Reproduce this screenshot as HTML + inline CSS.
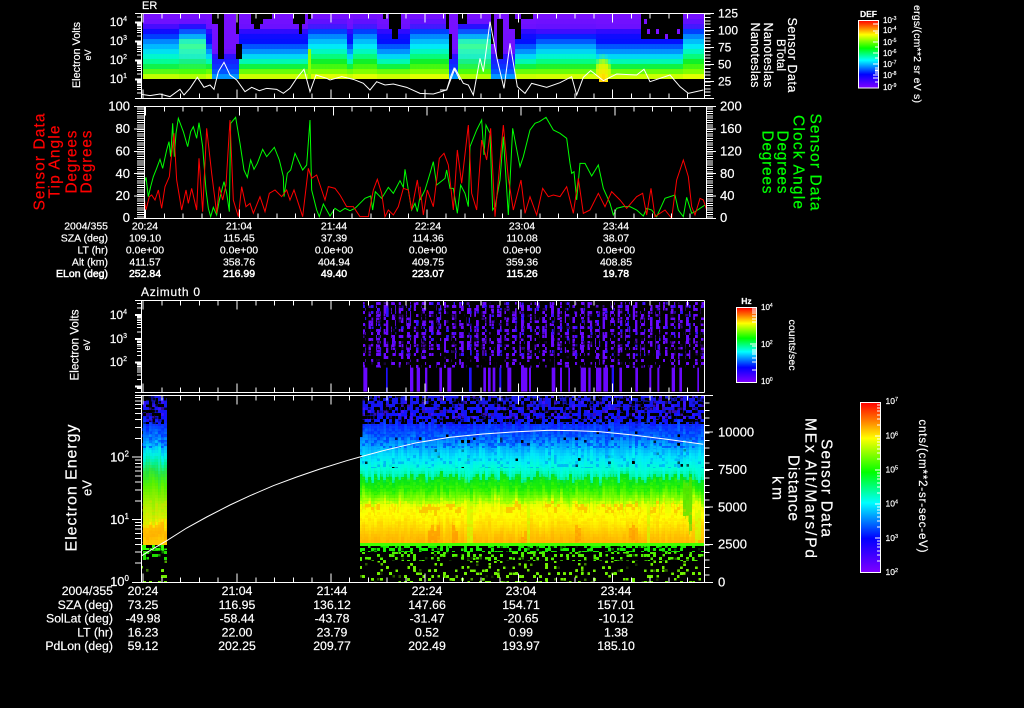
<!DOCTYPE html>
<html><head><meta charset="utf-8"><title>Sensor Data</title>
<style>
html,body{margin:0;padding:0;background:#000;width:1024px;height:708px;overflow:hidden}
svg{display:block}
text{font-family:"Liberation Sans",sans-serif;fill:#fff;stroke:#fff;stroke-width:.2}
.r text{fill:#ff0000;stroke:#ff0000}
.g text{fill:#00ff00;stroke:#00ff00}
</style></head><body>
<svg width="1024" height="708" viewBox="0 0 1024 708" xmlns="http://www.w3.org/2000/svg">
<defs>
<linearGradient id="cb" x1="0" y1="0" x2="0" y2="1">
<stop offset="0" stop-color="#ff0000"/><stop offset=".11" stop-color="#ff8000"/><stop offset=".21" stop-color="#ffff00"/><stop offset=".41" stop-color="#00ff00"/><stop offset=".59" stop-color="#00ffff"/><stop offset=".8" stop-color="#0000ff"/><stop offset="1" stop-color="#8000ff"/>
</linearGradient>
<linearGradient id="gA" gradientUnits="userSpaceOnUse" x1="0" y1="15" x2="0" y2="80">
<stop offset="0" stop-color="#7a10ff"/><stop offset=".14" stop-color="#6a10ff"/><stop offset=".21" stop-color="#2008ff"/><stop offset=".29" stop-color="#0010ff"/><stop offset=".4" stop-color="#0080ff"/><stop offset=".5" stop-color="#00c0ff"/><stop offset=".6" stop-color="#00f0e8"/><stop offset=".7" stop-color="#00ffa0"/><stop offset=".8" stop-color="#10f040"/><stop offset=".9" stop-color="#70ff00"/><stop offset=".96" stop-color="#d0ff00"/><stop offset="1" stop-color="#ffff00"/>
</linearGradient>
<linearGradient id="gB" gradientUnits="userSpaceOnUse" x1="0" y1="15" x2="0" y2="80">
<stop offset="0" stop-color="#7a10ff"/><stop offset=".1" stop-color="#6a10ff"/><stop offset=".2" stop-color="#1010ff"/><stop offset=".32" stop-color="#00a0ff"/><stop offset=".4" stop-color="#20f0c0"/><stop offset=".46" stop-color="#40ff90"/><stop offset=".62" stop-color="#20f0d0"/><stop offset=".76" stop-color="#10f060"/><stop offset=".88" stop-color="#50ff00"/><stop offset=".96" stop-color="#c0ff00"/><stop offset="1" stop-color="#ffff00"/>
</linearGradient>
<linearGradient id="gC" gradientUnits="userSpaceOnUse" x1="0" y1="15" x2="0" y2="80">
<stop offset="0" stop-color="#7a10ff"/><stop offset=".55" stop-color="#7010ff"/><stop offset=".65" stop-color="#2010ff"/><stop offset=".85" stop-color="#0040ff"/><stop offset="1" stop-color="#00c0ff"/>
</linearGradient>
<linearGradient id="gD" gradientUnits="userSpaceOnUse" x1="0" y1="15" x2="0" y2="80">
<stop offset="0" stop-color="#7a10ff"/><stop offset=".2" stop-color="#6a10ff"/><stop offset=".27" stop-color="#1808ff"/><stop offset=".42" stop-color="#0010ff"/><stop offset=".5" stop-color="#0060ff"/><stop offset=".6" stop-color="#00b0ff"/><stop offset=".66" stop-color="#00e8f0"/><stop offset=".74" stop-color="#00ff90"/><stop offset=".8" stop-color="#10f030"/><stop offset=".88" stop-color="#70ff00"/><stop offset=".96" stop-color="#d8ff00"/><stop offset="1" stop-color="#ffff00"/>
</linearGradient>
<linearGradient id="gE" gradientUnits="userSpaceOnUse" x1="0" y1="15" x2="0" y2="80">
<stop offset="0" stop-color="#7a10ff"/><stop offset=".16" stop-color="#5010ff"/><stop offset=".24" stop-color="#0030ff"/><stop offset=".36" stop-color="#00a0ff"/><stop offset=".48" stop-color="#00e8f8"/><stop offset=".6" stop-color="#00ffa0"/><stop offset=".72" stop-color="#10f020"/><stop offset=".86" stop-color="#70ff00"/><stop offset=".95" stop-color="#e0ff00"/><stop offset="1" stop-color="#ffff00"/>
</linearGradient>
<linearGradient id="gF" gradientUnits="userSpaceOnUse" x1="0" y1="15" x2="0" y2="80">
<stop offset="0" stop-color="#7a10ff"/><stop offset=".22" stop-color="#6010ff"/><stop offset=".3" stop-color="#0808ff"/><stop offset=".42" stop-color="#0060ff"/><stop offset=".52" stop-color="#00c0ff"/><stop offset=".62" stop-color="#00f0e0"/><stop offset=".7" stop-color="#00ff90"/><stop offset=".78" stop-color="#10f030"/><stop offset=".88" stop-color="#70ff00"/><stop offset=".96" stop-color="#e0ff00"/><stop offset="1" stop-color="#ffff00"/>
</linearGradient>
<radialGradient id="bump" cx=".5" cy=".95" r=".85">
<stop offset="0" stop-color="#ffa000"/><stop offset=".3" stop-color="#ffe800"/><stop offset=".7" stop-color="#c8ff00"/><stop offset="1" stop-color="#60ff00" stop-opacity="0"/>
</radialGradient>
<linearGradient id="gR" gradientUnits="userSpaceOnUse" x1="0" y1="396" x2="0" y2="560">
<stop offset="0" stop-color="#1818e8"/><stop offset=".146" stop-color="#1010ff"/><stop offset=".22" stop-color="#0050ff"/><stop offset=".3" stop-color="#00a0ff"/><stop offset=".38" stop-color="#00e8f8"/><stop offset=".45" stop-color="#00ffd0"/><stop offset=".488" stop-color="#00f0a0"/><stop offset=".494" stop-color="#00e020"/><stop offset=".573" stop-color="#20f000"/><stop offset=".634" stop-color="#90ff00"/><stop offset=".67" stop-color="#e8ff00"/><stop offset=".726" stop-color="#ffff00"/><stop offset=".787" stop-color="#ffe000"/><stop offset=".848" stop-color="#ffc000"/><stop offset=".896" stop-color="#ffb000"/><stop offset="1" stop-color="#ffb000"/>
</linearGradient>
<linearGradient id="gL" gradientUnits="userSpaceOnUse" x1="0" y1="396" x2="0" y2="560">
<stop offset="0" stop-color="#1818e8"/><stop offset=".146" stop-color="#1010ff"/><stop offset=".21" stop-color="#0050ff"/><stop offset=".3" stop-color="#00b0ff"/><stop offset=".36" stop-color="#00f0e0"/><stop offset=".41" stop-color="#00f090"/><stop offset=".45" stop-color="#20e040"/><stop offset=".54" stop-color="#50f000"/><stop offset=".66" stop-color="#a0f000"/><stop offset=".77" stop-color="#d8f000"/><stop offset=".785" stop-color="#ffc000"/><stop offset=".85" stop-color="#ffb000"/><stop offset=".89" stop-color="#ffc800"/><stop offset="1" stop-color="#ffc800"/>
</linearGradient>
<pattern id="cols" patternUnits="userSpaceOnUse" x="361" y="0" width="7.55" height="10"><rect x="0" y="0" width="4.6" height="10" fill="#6a08ff"/></pattern>
<pattern id="cols2" patternUnits="userSpaceOnUse" x="363" y="0" width="7.55" height="10"><rect x="0" y="0" width="3" height="10" fill="#3010ff"/></pattern>
<clipPath id="cR"><rect x="360" y="396" width="344" height="147.5"/></clipPath>
<clipPath id="cL"><rect x="142" y="396" width="25" height="149"/></clipPath>

<filter id="px1" filterUnits="userSpaceOnUse" x="140" y="14" width="566" height="68" color-interpolation-filters="sRGB">
<feFlood x="141" y="16" width="1" height="1" flood-color="#fff" result="f"/>
<feComposite in="f" in2="f" x="140" y="14" width="3" height="5" result="c"/>
<feTile in="c" result="t"/>
<feComposite in="SourceGraphic" in2="t" operator="in"/>
<feMorphology operator="dilate" radius="1 2"/>
</filter>
<filter id="spec" filterUnits="userSpaceOnUse" x="140" y="390" width="570" height="190" color-interpolation-filters="sRGB">
<feTurbulence type="fractalNoise" baseFrequency=".8 .03" numOctaves="2" seed="5" result="n0"/>
<feColorMatrix in="n0" type="matrix" values="1 0 0 0 0 0 0 0 0 .5 0 0 0 0 0 0 0 0 0 1" result="n"/>
<feDisplacementMap in="SourceGraphic" in2="n" scale="24" xChannelSelector="G" yChannelSelector="R" result="d"/>
<feFlood x="141" y="391" width="1" height="1" flood-color="#fff" result="f"/>
<feComposite in="f" in2="f" x="140" y="390" width="3" height="3" result="c"/>
<feTile in="c" result="t"/>
<feComposite in="d" in2="t" operator="in"/>
<feMorphology operator="dilate" radius="1"/>
</filter>
<filter id="h50" filterUnits="userSpaceOnUse" x="140" y="296" width="570" height="292" color-interpolation-filters="sRGB">
<feTurbulence type="fractalNoise" baseFrequency=".37" numOctaves="1" seed="3" result="n"/>
<feColorMatrix in="n" type="matrix" values="1 0 0 0 0 1 0 0 0 0 1 0 0 0 0 0 0 0 0 1" result="m"/>
<feFlood x="141" y="297" width="1" height="1" flood-color="#fff" result="f"/>
<feComposite in="f" in2="f" x="140" y="296" width="3" height="3" result="c"/>
<feTile in="c" result="t"/>
<feComposite in="m" in2="t" operator="in"/>
<feMorphology operator="dilate" radius="1"/>
<feColorMatrix type="matrix" values="0 0 0 0 1 0 0 0 0 1 0 0 0 0 1 40 0 0 0 -21" result="a"/>
<feComposite in="SourceGraphic" in2="a" operator="in"/>
</filter>
<filter id="h30" filterUnits="userSpaceOnUse" x="140" y="296" width="570" height="292" color-interpolation-filters="sRGB">
<feTurbulence type="fractalNoise" baseFrequency=".37" numOctaves="1" seed="11" result="n"/>
<feColorMatrix in="n" type="matrix" values="1 0 0 0 0 1 0 0 0 0 1 0 0 0 0 0 0 0 0 1" result="m"/>
<feFlood x="141" y="297" width="1" height="1" flood-color="#fff" result="f"/>
<feComposite in="f" in2="f" x="140" y="296" width="3" height="3" result="c"/>
<feTile in="c" result="t"/>
<feComposite in="m" in2="t" operator="in"/>
<feMorphology operator="dilate" radius="1"/>
<feColorMatrix type="matrix" values="0 0 0 0 1 0 0 0 0 1 0 0 0 0 1 40 0 0 0 -23" result="a"/>
<feComposite in="SourceGraphic" in2="a" operator="in"/>
</filter>
<filter id="h15" filterUnits="userSpaceOnUse" x="140" y="296" width="570" height="292" color-interpolation-filters="sRGB">
<feTurbulence type="fractalNoise" baseFrequency=".37" numOctaves="1" seed="23" result="n"/>
<feColorMatrix in="n" type="matrix" values="1 0 0 0 0 1 0 0 0 0 1 0 0 0 0 0 0 0 0 1" result="m"/>
<feFlood x="141" y="297" width="1" height="1" flood-color="#fff" result="f"/>
<feComposite in="f" in2="f" x="140" y="296" width="3" height="3" result="c"/>
<feTile in="c" result="t"/>
<feComposite in="m" in2="t" operator="in"/>
<feMorphology operator="dilate" radius="1"/>
<feColorMatrix type="matrix" values="0 0 0 0 1 0 0 0 0 1 0 0 0 0 1 40 0 0 0 -26" result="a"/>
<feComposite in="SourceGraphic" in2="a" operator="in"/>
</filter>
<filter id="h05" filterUnits="userSpaceOnUse" x="140" y="296" width="570" height="292" color-interpolation-filters="sRGB">
<feTurbulence type="fractalNoise" baseFrequency=".37" numOctaves="1" seed="41" result="n"/>
<feColorMatrix in="n" type="matrix" values="1 0 0 0 0 1 0 0 0 0 1 0 0 0 0 0 0 0 0 1" result="m"/>
<feFlood x="141" y="297" width="1" height="1" flood-color="#fff" result="f"/>
<feComposite in="f" in2="f" x="140" y="296" width="3" height="3" result="c"/>
<feTile in="c" result="t"/>
<feComposite in="m" in2="t" operator="in"/>
<feMorphology operator="dilate" radius="1"/>
<feColorMatrix type="matrix" values="0 0 0 0 1 0 0 0 0 1 0 0 0 0 1 40 0 0 0 -29" result="a"/>
<feComposite in="SourceGraphic" in2="a" operator="in"/>
</filter>
</defs>

<rect width="1024" height="708" fill="#000"/>

<!-- Panel 1 spectrogram -->
<g filter="url(#px1)">
<rect x="142" y="15" width="36" height="65" fill="url(#gA)"/>
<rect x="178" y="15" width="28" height="65" fill="url(#gB)"/>
<rect x="206" y="15" width="6" height="65" fill="url(#gD)"/>
<rect x="212" y="15" width="28" height="65" fill="url(#gC)"/>
<rect x="240" y="15" width="68" height="65" fill="url(#gD)"/>
<rect x="308" y="15" width="40" height="65" fill="url(#gE)"/>
<rect x="348" y="15" width="5" height="65" fill="url(#gD)"/>
<rect x="353" y="15" width="25" height="65" fill="url(#gE)"/>
<rect x="378" y="15" width="32" height="65" fill="url(#gD)"/>
<rect x="410" y="15" width="38" height="65" fill="url(#gE)"/>
<rect x="448" y="15" width="9" height="65" fill="url(#gC)"/>
<rect x="457" y="15" width="33" height="65" fill="url(#gB)"/>
<rect x="490" y="15" width="25" height="65" fill="url(#gC)"/>
<rect x="515" y="15" width="22" height="65" fill="url(#gD)"/>
<rect x="537" y="15" width="60" height="65" fill="url(#gF)"/>
<rect x="597" y="15" width="86" height="65" fill="url(#gD)"/>
<rect x="683" y="15" width="21" height="65" fill="url(#gE)"/>
<rect x="308" y="50" width="3" height="30" fill="#90ff00"/>
<ellipse cx="603" cy="68" rx="7" ry="17" fill="url(#bump)"/>
<rect x="640" y="15" width="43" height="25" fill="#000"/>
<rect x="645" y="18" width="3" height="5" fill="#7a10ff"/><rect x="648" y="30" width="3" height="5" fill="#7a10ff"/><rect x="655" y="27" width="3" height="5" fill="#7a10ff"/><rect x="664" y="33" width="3" height="5" fill="#7a10ff"/><rect x="676" y="27" width="3" height="5" fill="#7a10ff"/>
<path fill="#000" d="M212 15h6v10h-6zM218 15h5v22h-5zM217 40h6v20h-6zM235 15h5v17h-5zM237 43h4v17h-4zM252 15h10v8h-3v5h-4v-5h-3zM260 15h13v6h-13zM293 15h12v10h-3v7h-4v-7h-5zM308 15h4v5h-4zM382 15h5v6h-5zM388 15h14v12h-3v10h-7v-10h-4zM447 15h3v13h-3zM449 33h4v25h-4zM458 15h9v7h-9zM490 15h4v28h-4zM497 20h6v40h-6zM510 15h5v15h-5zM515 20h5v20h-5zM520 15h13v5h-13z"/>
</g>

<!-- Panel 1 white line -->
<g transform="translate(60,0) scale(.33333)"><polyline vector-effect="non-scaling-stroke" fill="none" stroke="#fff" stroke-width="1" points="245,283 270,287 300,282 330,290 360,268 372,285 390,265 412,232 432,262 450,255 462,268 475,215 492,187 510,225 530,240 555,275 575,262 598,272 620,265 650,268 670,280 690,265 710,235 732,208 750,275 768,225 800,235 810,240 845,230 880,238 910,250 930,270 950,245 975,255 1000,252 1040,262 1080,280 1120,282 1160,270 1172,230 1182,205 1200,240"/></g>
<g transform="translate(440,0) scale(.33333)"><polyline vector-effect="non-scaling-stroke" fill="none" stroke="#fff" stroke-width="1" points="0,270 20,270 45,205 70,250 85,255 100,285 120,175 130,215 150,65 172,180 192,265 210,130 232,260 255,280 275,250 320,262 360,248 395,230 410,285 430,232 452,212 490,242 530,222 590,225 612,208 630,245 690,225 720,260 745,280 790,270"/></g>

<!-- Panel 2 curves -->
<g transform="translate(20,100) scale(.33333)" fill="none" stroke-width="1">
<polyline vector-effect="non-scaling-stroke" stroke="#00ff00" points="372,250 378,232 385,290 392,260 400,230 410,205 420,178 428,205 440,150 447,125 452,170 458,70 463,170 468,100 475,55 490,95 503,140 512,95 520,80 530,115 537,68 548,140 558,270 565,325 572,350 580,322 590,345 598,300 612,245 620,280 628,335 632,70 647,52 660,130 672,210 682,232 692,180 702,208 712,190 728,148 740,170 763,142 778,180 790,230 792,290 802,220 812,210 825,160 848,210 860,195 870,60 875,270 890,330 898,350 910,312 930,348 945,325 960,335 975,325 990,332 1005,325 1020,310 1035,295 1052,288 1058,330 1066,275 1085,295 1105,262 1120,280 1140,242 1150,262 1155,208 1165,270 1175,330 1185,310 1192,335 1200,290"/>
<polyline vector-effect="non-scaling-stroke" stroke="#ff0000" points="372,290 378,330 388,290 395,285 405,300 415,270 425,325 435,260 448,230 452,190 462,100 470,240 485,330 498,270 505,310 515,265 530,330 537,175 548,335 560,85 575,220 590,340 598,260 608,300 618,255 630,60 640,300 655,350 665,260 678,320 690,310 700,340 720,290 735,335 748,280 765,270 785,290 800,270 810,300 822,270 848,350 865,205 875,235 890,225 905,270 915,300 925,260 945,265 960,285 980,320 1000,320 1020,350 1045,350 1060,270 1072,238 1085,280 1095,350 1105,330 1120,345 1135,320 1150,265 1165,270 1175,330 1192,240 1200,300"/>
</g>
<g transform="translate(420,100) scale(.33333)" fill="none" stroke-width="1">
<polyline vector-effect="non-scaling-stroke" stroke="#00ff00" points="0,300 15,270 30,220 40,185 50,255 75,235 80,210 90,265 100,265 112,340 122,255 135,280 145,320 150,140 170,90 185,60 192,165 198,75 210,100 218,330 225,320 240,240 250,110 265,345 278,85 300,200 310,170 330,90 345,70 358,65 378,52 400,90 420,100 440,115 450,190 455,220 462,215 470,300 480,190 495,190 515,228 535,195 550,265 570,310 580,345 590,325 610,320 630,320 650,330 670,348 680,325 695,330 710,350 735,295 765,285 775,330 790,350 800,292 815,340 825,335 855,315"/>
<polyline vector-effect="non-scaling-stroke" stroke="#ff0000" points="0,260 10,345 22,270 40,320 58,175 72,160 85,195 100,330 112,150 125,250 145,75 155,280 170,330 185,120 200,180 212,85 225,350 250,75 265,235 280,330 303,240 315,340 330,290 350,345 368,265 385,290 400,285 420,290 440,260 460,340 475,235 490,340 510,330 535,280 555,320 575,275 600,300 620,325 650,290 668,280 680,345 693,265 705,350 735,330 755,355 770,240 790,180 805,230 815,320 825,345 840,295 850,300 860,330"/>
</g>

<!-- Panel 3 data -->
<rect x="363" y="302" width="341" height="54" fill="url(#cols)" filter="url(#h50)"/>
<rect x="363" y="302" width="341" height="54" fill="url(#cols2)" filter="url(#h15)"/>
<rect x="363" y="356" width="341" height="12" fill="url(#cols)" filter="url(#h30)"/>
<g transform="translate(360,296) scale(.33333)">
<path fill="#6a08ff" d="M10 215h12v72h-12zM150 215h10v72h-10zM170 215h10v72h-10zM195 215h7v72h-7zM238 215h8v72h-8zM262 215h12v72h-12zM370 215h8v72h-8zM384 215h8v72h-8zM398 215h8v72h-8zM442 215h12v72h-12zM483 215h19v72h-19zM507 215h6v72h-6zM575 215h11v72h-11zM600 215h6v72h-6zM625 215h5v72h-5zM662 215h16v72h-16zM685 215h7v72h-7zM708 215h16v72h-16zM730 215h14v72h-14zM778 215h8v72h-8zM826 215h8v72h-8zM868 215h6v72h-6zM892 215h6v72h-6zM935 215h10v72h-10zM958 215h8v72h-8zM1012 215h5v72h-5z"/>
<path fill="#2010ff" d="M78 215h5v72h-5zM327 215h8v72h-8zM418 215h6v72h-6zM755 215h7v72h-7z"/>
</g>

<!-- Panel 4 spectrogram -->
<g clip-path="url(#cL)"><g filter="url(#spec)">
<rect x="142" y="380" width="25" height="180" fill="url(#gL)"/>
</g></g>
<g clip-path="url(#cR)"><g filter="url(#spec)">
<rect x="360" y="380" width="344" height="180" fill="url(#gR)"/>
<path fill="#ffa800" opacity=".6" d="M365 505h15v6h-15zM390 505h10v6h-10zM420 505h20v6h-20zM446 505h14v6h-14zM505 505h15v6h-15zM545 505h15v6h-15zM575 505h15v6h-15zM600 505h40v6h-40zM650 505h15v6h-15zM670 505h10v6h-10z"/>
<path fill="#ff9000" opacity=".65" d="M428 526h12v16h-12zM453 528h5v14h-5zM574 526h6v16h-6zM630 526h8v16h-8zM520 530h10v12h-10z"/>
<path fill="#c8ff00" opacity=".7" d="M466 498h8v48h-8zM526 500h4v46h-4zM648 500h3v46h-3zM694 510h6v36h-6z"/>
<path fill="#50e000" opacity=".8" d="M682 482h10v36h-10zM688 518h3v12h-3z"/>
</g></g>
<!-- texture overlays -->
<rect x="360" y="426" width="344" height="22" fill="#0020ff" opacity=".55" filter="url(#h30)"/>
<rect x="360" y="448" width="344" height="20" fill="#0080ff" opacity=".5" filter="url(#h15)"/>
<rect x="360" y="478" width="344" height="26" fill="#60ff00" opacity=".3" filter="url(#h30)"/>
<rect x="360" y="506" width="344" height="37" fill="#ffc800" opacity=".3" filter="url(#h30)"/>
<rect x="142" y="426" width="25" height="22" fill="#0020ff" opacity=".55" filter="url(#h30)"/>
<rect x="142" y="500" width="25" height="43" fill="#ffd000" opacity=".25" filter="url(#h30)"/>
<!-- holes -->
<rect x="142" y="396" width="25" height="28" fill="#000" filter="url(#h50)"/>
<rect x="142" y="396" width="25" height="28" fill="#5010ff" opacity=".6" filter="url(#h15)"/>
<rect x="360" y="396" width="344" height="28" fill="#000" filter="url(#h50)"/>
<rect x="360" y="396" width="344" height="24" fill="#5010ff" opacity=".7" filter="url(#h15)"/>
<rect x="360" y="424" width="344" height="18" fill="#000" filter="url(#h05)"/>
<rect x="360" y="442" width="344" height="26" fill="#000" filter="url(#h05)"/>
<rect x="360" y="396" width="2.5" height="41" fill="#000"/>
<!-- bottom -->
<rect x="360" y="543" width="344" height="3" fill="#40ff00"/>
<rect x="360" y="546" width="344" height="6" fill="#18f000" filter="url(#h50)"/>
<rect x="360" y="552" width="344" height="9" fill="#50f000" filter="url(#h30)"/>
<rect x="360" y="561" width="344" height="21" fill="#70f000" filter="url(#h15)"/>
<rect x="142" y="545" width="25" height="5" fill="#30ff00" filter="url(#h50)"/>
<rect x="142" y="550" width="25" height="10" fill="#20e000" filter="url(#h30)"/>
<rect x="142" y="560" width="25" height="22" fill="#70f000" filter="url(#h15)"/>

<polyline fill="none" stroke="#fff" stroke-width="1" points="141.7,555.7 150,550.6 166.7,540.7 186.7,528 206.7,517 230,505 250,495.7 273.3,485.7 296.7,477 320,469 346.7,460.7 363.3,456 383,450.7 416.7,442.7 450,437.3 483,434 516.7,431.7 550,430.3 576.7,430.7 600,431.7 633,435 666.7,439.3 703.3,444.3"/>

<!-- Axes -->
<g stroke="#fff" fill="none" shape-rendering="crispEdges">
<!-- Panel 1 box -->
<path stroke-width="1" d="M135 13.5H714M135 98.5H714M141.5 13.5V98.5M704.5 13.5V98.5"/>
<line x1="142.6" x2="704" y1="16" y2="16" stroke-width="5" stroke-dasharray="1 17.78"/>
<line x1="142.6" x2="704" y1="96" y2="96" stroke-width="5" stroke-dasharray="1 17.78"/>
<line x1="142.6" x2="704" y1="18" y2="18" stroke-width="9" stroke-dasharray="1 92.9"/>
<line x1="142.6" x2="704" y1="94" y2="94" stroke-width="9" stroke-dasharray="1 92.9"/>
<path d="M137 93h5M137 89.6h5M137 87.3h5M137 85.4h5M137 83.9h5M137 82.6h5M137 81.5h5M137 80.6h5M137 74h5M137 70.6h5M137 68.3h5M137 66.4h5M137 64.9h5M137 63.6h5M137 62.5h5M137 61.6h5M137 55h5M137 51.6h5M137 49.3h5M137 47.4h5M137 45.9h5M137 44.6h5M137 43.5h5M137 42.6h5M137 36h5M137 32.6h5M137 30.3h5M137 28.4h5M137 26.9h5M137 25.6h5M137 24.5h5M137 23.6h5M137 17h5"/>
<path stroke-width="2" d="M135 79.7h7M135 60.7h7M135 41.7h7M135 22.7h7"/>
<line x1="707.5" x2="707.5" y1="13.5" y2="98.5" stroke-width="6" stroke-dasharray="1 2.4"/>
<path d="M704 30.6h10M704 47.6h10M704 64.6h10M704 81.5h10"/>

<!-- Panel 2 box -->
<path d="M134 106.5H716M134 218.5H716M144.5 106.5V218.5M706.5 106.5V218.5"/>
<line x1="145" x2="706" y1="109" y2="109" stroke-width="5" stroke-dasharray="1 17.78"/>
<line x1="145" x2="706" y1="216" y2="216" stroke-width="5" stroke-dasharray="1 17.78"/>
<line x1="145" x2="706" y1="111" y2="111" stroke-width="9" stroke-dasharray="1 92.9"/>
<line x1="145" x2="706" y1="214" y2="214" stroke-width="9" stroke-dasharray="1 92.9"/>
<line x1="140.5" x2="140.5" y1="106.5" y2="218.5" stroke-width="7" stroke-dasharray="1 1.24"/>
<line x1="709.5" x2="709.5" y1="106.5" y2="218.5" stroke-width="7" stroke-dasharray="1 1.24"/>
<path d="M134 128.9h10M134 151.3h10M134 173.7h10M134 196.1h10M706 128.9h10M706 151.3h10M706 173.7h10M706 196.1h10"/>

<!-- Panel 3 box -->
<path d="M135 300.5H704.5M135 392.5H704.5M141.5 300.5V392.5M704.5 300.5V392.5"/>
<line x1="142.6" x2="704" y1="303" y2="303" stroke-width="5" stroke-dasharray="1 17.78"/>
<line x1="142.6" x2="704" y1="390" y2="390" stroke-width="5" stroke-dasharray="1 17.78"/>
<line x1="142.6" x2="704" y1="305" y2="305" stroke-width="9" stroke-dasharray="1 92.9"/>
<line x1="142.6" x2="704" y1="388" y2="388" stroke-width="9" stroke-dasharray="1 92.9"/>
<path d="M137 388.7h5M137 387.5h5M137 379.3h5M137 375.1h5M137 372.1h5M137 369.8h5M137 368h5M137 366.4h5M137 365h5M137 363.8h5M137 355.6h5M137 351.4h5M137 348.4h5M137 346.1h5M137 344.3h5M137 342.7h5M137 341.3h5M137 340.1h5M137 331.9h5M137 327.7h5M137 324.7h5M137 322.4h5M137 320.6h5M137 319h5M137 317.6h5M137 316.4h5M137 307.9h5M137 303.7h5"/>
<path stroke-width="2" d="M135 315h7M135 339h7M135 362.7h7M135 386.4h7"/>

<!-- Panel 4 box -->
<path d="M135 395.5H713M132 582.5H713M141.5 395.5V582.5M704.5 395.5V582.5"/>
<line x1="142.6" x2="704" y1="398" y2="398" stroke-width="5" stroke-dasharray="1 17.78"/>
<line x1="142.6" x2="704" y1="580" y2="580" stroke-width="5" stroke-dasharray="1 17.78"/>
<line x1="142.6" x2="704" y1="400" y2="400" stroke-width="9" stroke-dasharray="1 92.9"/>
<line x1="142.6" x2="704" y1="578" y2="578" stroke-width="9" stroke-dasharray="1 92.9"/>
<path d="M135 563.2h7M135 552.2h7M135 544.4h7M135 538.3h7M135 533.4h7M135 529.2h7M135 525.7h7M135 522.4h7M135 500.8h7M135 489.8h7M135 482h7M135 475.9h7M135 471h7M135 466.8h7M135 463.3h7M135 460h7M135 438.4h7M135 427.4h7M135 419.6h7M135 413.5h7M135 408.6h7M135 404.4h7M135 400.9h7M135 397.6h7"/>
<path d="M132 519.6h10M132 457.2h10"/>
<line x1="707" x2="707" y1="395" y2="582" stroke-width="5" stroke-dasharray="1 6.48"/>
<path d="M704 544.5h9M704 507h9M704 469.5h9M704 432h9"/>
</g>

<!-- Colorbars -->
<rect x="858.5" y="20.5" width="20" height="67.5" fill="url(#cb)" stroke="#fff" stroke-width="1"/>
<rect x="736.5" y="307.5" width="20" height="75" fill="url(#cb)" stroke="#fff" stroke-width="1"/>
<rect x="860.5" y="402.5" width="20" height="170" fill="url(#cb)" stroke="#fff" stroke-width="1"/>
<g stroke="#fff" shape-rendering="crispEdges" fill="none">
<path d="M873 24h5M873 31h5M875 33h3M873 42h5M875 47h3M873 53h5M875 58h3M873 64h5M875 68h3M875 70h3M873 75h5M875 71h3M875 73h3M873 78h5M875 82h3"/>
<path d="M752 309h4M752 311h4M752 313h4M752 316h4M752 319h4M752 322h4M750 344h6M752 346h4M752 350h4M752 352h4M752 354h4M752 358h4M752 362h4M752 370h4"/>
<path d="M877 405h3M877 408h3M877 411h3M877 415h3M877 419h3M877 425h3M875 436h5M877 439h3M877 442h3M877 445h3M877 449h3M877 453h3M877 459h3M875 470h5M877 473h3M877 476h3M877 479h3M877 483h3M877 487h3M877 493h3M875 504h5M877 507h3M877 510h3M877 513h3M877 517h3M877 521h3M877 527h3M875 538h5M877 541h3M877 544h3M877 547h3M877 551h3M877 555h3M877 561h3"/>
</g>

<!-- Panel 1 text -->
<text x="142" y="9" font-size="11">ER</text>
<g font-size="12" text-anchor="end">
<text x="127" y="26">10<tspan dy="-5" font-size="7">4</tspan></text>
<text x="127" y="45">10<tspan dy="-5" font-size="7">3</tspan></text>
<text x="127" y="64">10<tspan dy="-5" font-size="7">2</tspan></text>
<text x="127" y="83">10<tspan dy="-5" font-size="7">1</tspan></text>
</g>
<g font-size="12">
<text x="718" y="17.5">125</text><text x="718" y="34.5">100</text><text x="718" y="51.5">75</text><text x="718" y="68.5">50</text><text x="718" y="85.5">25</text>
</g>
<g text-anchor="middle" dominant-baseline="central">
<text transform="translate(77,55) rotate(-90)" font-size="10.7" textLength="66">Electron Volts</text>
<text transform="translate(88,55) rotate(-90)" font-size="9">eV</text>
<text transform="translate(792,55) rotate(90)" font-size="12.5" textLength="75">Sensor Data</text>
<text transform="translate(780,55) rotate(90)" font-size="11.5" textLength="32">BTotal</text>
<text transform="translate(768,55) rotate(90)" font-size="12.5" textLength="65">Nanoteslas</text>
<text transform="translate(755,55) rotate(90)" font-size="12.5" textLength="65">Nanoteslas</text>
<text transform="translate(917,54) rotate(90)" font-size="10.5" textLength="98">ergs/(cm**2 sr eV s)</text>
</g>
<text x="868.5" y="17" font-size="8.5" font-weight="bold" text-anchor="middle">DEF</text>
<g font-size="8">
<text x="883" y="23">10<tspan dy="-3" font-size="5">-3</tspan></text>
<text x="883" y="33">10<tspan dy="-3" font-size="5">-4</tspan></text>
<text x="883" y="45">10<tspan dy="-3" font-size="5">-5</tspan></text>
<text x="883" y="56">10<tspan dy="-3" font-size="5">-6</tspan></text>
<text x="883" y="67">10<tspan dy="-3" font-size="5">-7</tspan></text>
<text x="883" y="78">10<tspan dy="-3" font-size="5">-8</tspan></text>
<text x="883" y="90">10<tspan dy="-3" font-size="5">-9</tspan></text>
</g>

<!-- Panel 2 text -->
<g font-size="13" text-anchor="end">
<text x="130" y="110.5">100</text><text x="130" y="133">80</text><text x="130" y="155.5">60</text><text x="130" y="178">40</text><text x="130" y="200">20</text><text x="130" y="222">0</text>
</g>
<g font-size="13">
<text x="720" y="110.5">200</text><text x="720" y="133">160</text><text x="720" y="155.5">120</text><text x="720" y="178">80</text><text x="720" y="200">40</text><text x="720" y="222">0</text>
</g>
<g class="r" text-anchor="middle" dominant-baseline="central" font-size="15.5">
<text transform="translate(40,162) rotate(-90)" textLength="97">Sensor Data</text>
<text transform="translate(55,162) rotate(-90)" textLength="73">Tip Angle</text>
<text transform="translate(72,162) rotate(-90)" textLength="63">Degrees</text>
<text transform="translate(87,162) rotate(-90)" textLength="63">Degrees</text>
</g>
<g class="g" text-anchor="middle" dominant-baseline="central" font-size="15.5">
<text transform="translate(815,162) rotate(90)" textLength="97">Sensor Data</text>
<text transform="translate(798,162) rotate(90)" textLength="94">Clock Angle</text>
<text transform="translate(782,162) rotate(90)" textLength="63">Degrees</text>
<text transform="translate(767,162) rotate(90)" textLength="63">Degrees</text>
</g>

<!-- Table 1 -->
<g font-size="10.5" text-anchor="end">
<text x="108" y="229.5">2004/355</text><text x="108" y="241.5">SZA (deg)</text><text x="108" y="253.5">LT (hr)</text><text x="108" y="265.5">Alt (km)</text><text x="108" y="277" style="stroke-width:.5">ELon (deg)</text>
</g>
<g font-size="10.5" text-anchor="middle">
<text x="145" y="229.5">20:24</text><text x="239" y="229.5">21:04</text><text x="334" y="229.5">21:44</text><text x="428" y="229.5">22:24</text><text x="522" y="229.5">23:04</text><text x="616" y="229.5">23:44</text>
<text x="145" y="241.5">109.10</text><text x="239" y="241.5">115.45</text><text x="334" y="241.5">37.39</text><text x="428" y="241.5">114.36</text><text x="522" y="241.5">110.08</text><text x="616" y="241.5">38.07</text>
<text x="145" y="253.5">0.0e+00</text><text x="239" y="253.5">0.0e+00</text><text x="334" y="253.5">0.0e+00</text><text x="428" y="253.5">0.0e+00</text><text x="522" y="253.5">0.0e+00</text><text x="616" y="253.5">0.0e+00</text>
<text x="145" y="265.5">411.57</text><text x="239" y="265.5">358.76</text><text x="334" y="265.5">404.94</text><text x="428" y="265.5">409.75</text><text x="522" y="265.5">359.36</text><text x="616" y="265.5">408.85</text>
<text x="145" y="277" style="stroke-width:.5">252.84</text><text x="239" y="277" style="stroke-width:.5">216.99</text><text x="334" y="277" style="stroke-width:.5">49.40</text><text x="428" y="277" style="stroke-width:.5">223.07</text><text x="522" y="277" style="stroke-width:.5">115.26</text><text x="616" y="277" style="stroke-width:.5">19.78</text>
</g>

<!-- Panel 3 text -->
<text x="141" y="296" font-size="12" textLength="59">Azimuth 0</text>
<g font-size="12" text-anchor="end">
<text x="127" y="319">10<tspan dy="-5" font-size="7">4</tspan></text>
<text x="127" y="343">10<tspan dy="-5" font-size="7">3</tspan></text>
<text x="127" y="366">10<tspan dy="-5" font-size="7">2</tspan></text>
</g>
<g text-anchor="middle" dominant-baseline="central">
<text transform="translate(75.5,345) rotate(-90)" font-size="11.5" textLength="71">Electron Volts</text>
<text transform="translate(87,345) rotate(-90)" font-size="9">eV</text>
<text transform="translate(792,345) rotate(90)" font-size="10.5" textLength="51">counts/sec</text>
</g>
<text x="746.5" y="304" font-size="8.5" font-weight="bold" text-anchor="middle">Hz</text>
<g font-size="8">
<text x="761" y="310">10<tspan dy="-3" font-size="5">4</tspan></text>
<text x="761" y="347">10<tspan dy="-3" font-size="5">2</tspan></text>
<text x="761" y="384">10<tspan dy="-3" font-size="5">0</tspan></text>
</g>

<!-- Panel 4 text -->
<g font-size="13" text-anchor="end">
<text x="129" y="461.5">10<tspan dy="-5" font-size="8">2</tspan></text>
<text x="129" y="524">10<tspan dy="-5" font-size="8">1</tspan></text>
<text x="129" y="586">10<tspan dy="-5" font-size="8">0</tspan></text>
</g>
<g font-size="13">
<text x="718" y="436.5">10000</text><text x="718" y="474">7500</text><text x="718" y="511.5">5000</text><text x="718" y="548.5">2500</text><text x="718" y="586.5">0</text>
</g>
<g text-anchor="middle" dominant-baseline="central">
<text transform="translate(72,488) rotate(-90)" font-size="16" textLength="127">Electron Energy</text>
<text transform="translate(87,488) rotate(-90)" font-size="13">eV</text>
<text transform="translate(826,488) rotate(90)" font-size="15.5" textLength="98">Sensor Data</text>
<text transform="translate(810,488) rotate(90)" font-size="15.5" textLength="140">MEx Alt/Mars/Pd</text>
<text transform="translate(793,488) rotate(90)" font-size="15.5" textLength="66">Distance</text>
<text transform="translate(777,488) rotate(90)" font-size="15.5" textLength="24">km</text>
<text transform="translate(922,486) rotate(90)" font-size="11.5" textLength="133">cnts/(cm**2-sr-sec-eV)</text>
</g>
<g font-size="8.5">
<text x="885.5" y="404">10<tspan dy="-3" font-size="5.5">7</tspan></text>
<text x="885.5" y="438.5">10<tspan dy="-3" font-size="5.5">6</tspan></text>
<text x="885.5" y="472.5">10<tspan dy="-3" font-size="5.5">5</tspan></text>
<text x="885.5" y="506.5">10<tspan dy="-3" font-size="5.5">4</tspan></text>
<text x="885.5" y="541">10<tspan dy="-3" font-size="5.5">3</tspan></text>
<text x="885.5" y="575">10<tspan dy="-3" font-size="5.5">2</tspan></text>
</g>

<!-- Table 2 -->
<g font-size="12.3" text-anchor="end">
<text x="113" y="595">2004/355</text><text x="113" y="609">SZA (deg)</text><text x="113" y="622.5">SolLat (deg)</text><text x="113" y="636.5">LT (hr)</text><text x="113" y="650">PdLon (deg)</text>
</g>
<g font-size="12.3" text-anchor="middle">
<text x="143" y="595">20:24</text><text x="237" y="595">21:04</text><text x="332" y="595">21:44</text><text x="427" y="595">22:24</text><text x="521" y="595">23:04</text><text x="616" y="595">23:44</text>
<text x="143" y="609">73.25</text><text x="237" y="609">116.95</text><text x="332" y="609">136.12</text><text x="427" y="609">147.66</text><text x="521" y="609">154.71</text><text x="616" y="609">157.01</text>
<text x="143" y="622.5">-49.98</text><text x="237" y="622.5">-58.44</text><text x="332" y="622.5">-43.78</text><text x="427" y="622.5">-31.47</text><text x="521" y="622.5">-20.65</text><text x="616" y="622.5">-10.12</text>
<text x="143" y="636.5">16.23</text><text x="237" y="636.5">22.00</text><text x="332" y="636.5">23.79</text><text x="427" y="636.5">0.52</text><text x="521" y="636.5">0.99</text><text x="616" y="636.5">1.38</text>
<text x="143" y="650">59.12</text><text x="237" y="650">202.25</text><text x="332" y="650">209.77</text><text x="427" y="650">202.49</text><text x="521" y="650">193.97</text><text x="616" y="650">185.10</text>
</g>
</svg>
</body></html>
